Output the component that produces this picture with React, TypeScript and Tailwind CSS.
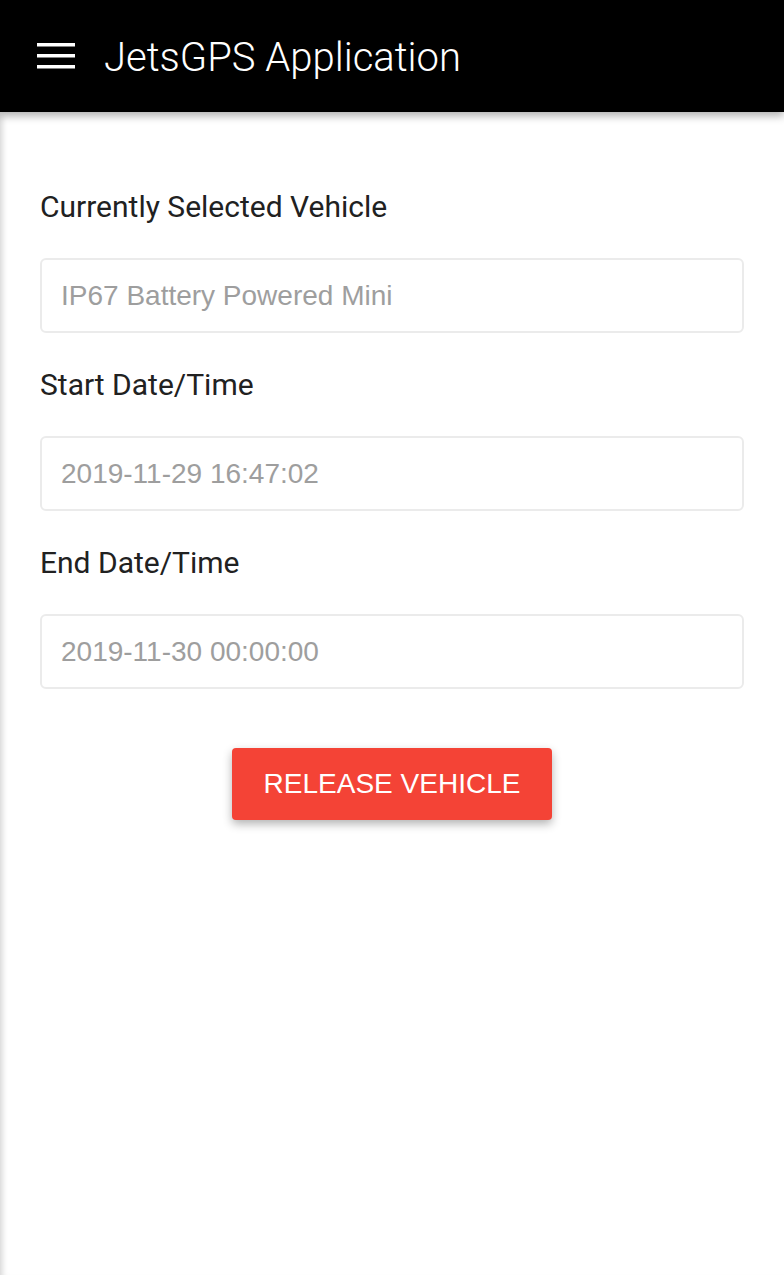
import React from 'react';

const fields = [
    { label: 'Currently Selected Vehicle', value: 'IP67 Battery Powered Mini' },
    { label: 'Start Date/Time', value: '2019-11-29 16:47:02' },
    { label: 'End Date/Time', value: '2019-11-30 00:00:00' },
];

const MenuIcon = () => (
    <svg width="38" height="26" viewBox="0 0 38 26" className="block">
        <rect x="0" y="0" width="38" height="3.5" fill="white" />
        <rect x="0" y="11" width="38" height="3.5" fill="white" />
        <rect x="0" y="22" width="38" height="3.5" fill="white" />
    </svg>
);

const App: React.FC = () => {
    return (
        <div className="min-h-[1275px] w-[784px] bg-white flex flex-col font-['Roboto',sans-serif]">
            <header className="relative z-10 h-[112px] bg-black flex items-center pl-[37px] shadow-[0_4px_8px_rgba(0,0,0,0.3)]">
                <MenuIcon />
                <h1 className="ml-[29px] text-white text-[40px] font-light leading-none pt-[3px]">
                    JetsGPS Application
                </h1>
            </header>

            <main className="flex-1 px-[40px] pt-[75px] shadow-[inset_7px_0_6px_-5px_rgba(0,0,0,0.18)]">
                {fields.map((f) => (
                    <div key={f.label} className="mb-[32px]">
                        <label className="block text-[30px] leading-[40px] text-[#212121]">{f.label}</label>
                        <input
                            readOnly
                            placeholder={f.value}
                            className="mt-[31px] block w-full h-[75px] border-2 border-[#ebebeb] rounded-[6px] px-[19px] text-[28px] font-['Liberation_Sans',Arial,sans-serif] placeholder:text-[#9e9e9e] outline-none"
                        />
                    </div>
                ))}

                <div className="flex justify-center pt-[27px]">
                    <button className="w-[320px] h-[72px] bg-[#f44336] rounded-[4px] text-white text-[28px] font-['Liberation_Sans',Arial,sans-serif] shadow-[0_4px_10px_rgba(0,0,0,0.3)]">
                        RELEASE VEHICLE
                    </button>
                </div>
            </main>
        </div>
    );
};

export default App;
